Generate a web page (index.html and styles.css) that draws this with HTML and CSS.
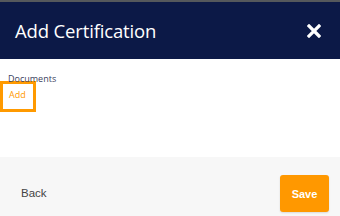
FILE: index.html
```html
<!DOCTYPE html>
<html>
<head>
<meta charset="utf-8">
<link rel="stylesheet" href="styles.css">
</head>
<body>
<div class="topbar"></div>
<header class="header">
  <h1 class="title">Add Certification</h1>
  <button class="close" aria-label="Close">
    <svg width="14" height="14" viewBox="0 0 14 14"><path d="M2 2 L12 12 M12 2 L2 12" stroke="#fff" stroke-width="3.2" stroke-linecap="square"/></svg>
  </button>
</header>
<main class="content">
  <div class="label">Documents</div>
  <div class="add-box"><span class="add">Add</span></div>
</main>
<footer class="footer">
  <span class="back">Back</span>
  <button class="save">Save</button>
</footer>
</body>
</html>
```
FILE: styles.css
```css
html, body {
  margin: 0;
  padding: 0;
  background: #fff;
  width: 340px;
  height: 216px;
  overflow: hidden;
}
.topbar {
  height: 2px;
  background: #55585c;
}
.header {
  height: 57px;
  background: #0c1947;
  display: flex;
  align-items: center;
  justify-content: space-between;
  padding: 0 19px 0 15px;
}
.title {
  margin: 0;
  color: #fff;
  font-family: "Open Sans", sans-serif;
  font-weight: 500;
  font-size: 18.5px;
  letter-spacing: -0.15px;
}
.close {
  background: none;
  border: 0;
  padding: 0;
  display: flex;
}
.content {
  height: 98px;
  padding-top: 15px;
  box-sizing: border-box;
}
.label {
  margin-left: 8px;
  font-family: "Open Sans", sans-serif;
  font-size: 9px;
  line-height: 10px;
  color: #3b4160;
}
.add-box {
  width: 36px;
  height: 31px;
  box-sizing: border-box;
  border: 3px solid #ff9a00;
  margin-top: -3px;
  padding: 6px 0 0 6px;
}
.add {
  font-family: "Open Sans", sans-serif;
  font-size: 9px;
  line-height: 10px;
  color: #ff9a00;
  display: block;
}
.footer {
  height: 59px;
  background: #f7f7f7;
  display: flex;
  align-items: flex-start;
  justify-content: space-between;
  padding: 18px 11px 0 21px;
  box-sizing: border-box;
}
.back {
  font-family: "Liberation Sans", Arial, sans-serif;
  font-size: 11.5px;
  color: #444;
  line-height: 37px;
}
.save {
  width: 49px;
  height: 37px;
  border: 0;
  border-radius: 3px;
  background: #ff9800;
  color: #fff;
  font-family: "Liberation Sans", Arial, sans-serif;
  font-size: 11px;
  font-weight: 700;
  padding: 0;
  box-shadow: 0 1px 2px rgba(0,0,0,0.12);
}
```
